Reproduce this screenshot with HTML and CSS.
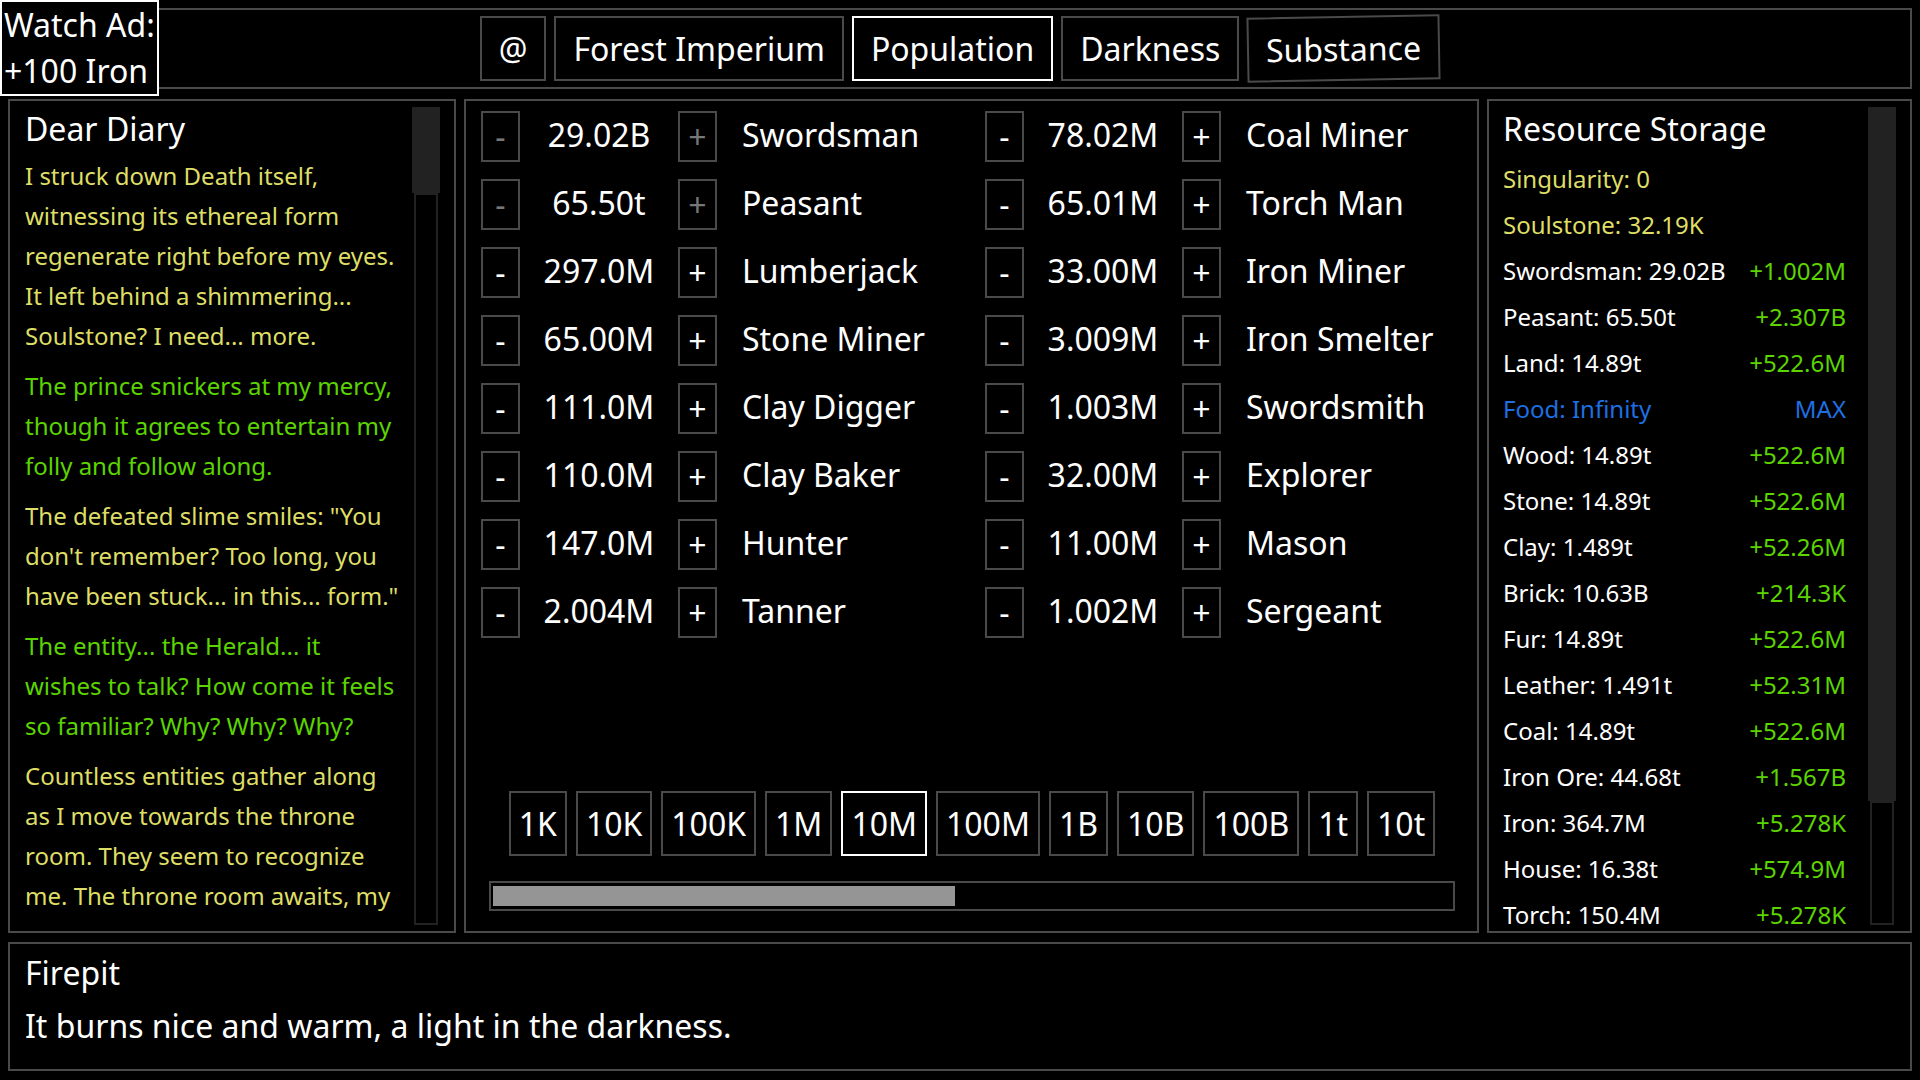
FILE: index.html
```html
<!DOCTYPE html>
<html lang="en">
  <head>
    <meta charset="UTF-8" />
    <meta name="viewport" content="width=device-width, initial-scale=1.0" />
    <title>Forest Imperium</title>
    <link rel="stylesheet" href="styles.css">
  </head>
  <body>
    <div class="watch-ad">Watch Ad:<br>+100 Iron</div>

    <nav class="top-bar">
      <button class="tab">@</button>
      <button class="tab">Forest Imperium</button>
      <button class="tab active">Population</button>
      <button class="tab">Darkness</button>
      <button class="tab wobble">Substance</button>
    </nav>

    <div class="main">
      <section class="panel diary">
        <div class="panel-body">
          <h2>Dear Diary</h2>
          <p class="yellow">I struck down Death itself, witnessing its ethereal form regenerate right before my eyes. It left behind a shimmering... Soulstone? I need... more.</p>
          <p class="green">The prince snickers at my mercy, though it agrees to entertain my folly and follow along.</p>
          <p class="yellow">The defeated slime smiles: "You don't remember? Too long, you have been stuck... in this... form."</p>
          <p class="green">The entity... the Herald... it wishes to talk? How come it feels so familiar? Why? Why? Why?</p>
          <p class="yellow">Countless entities gather along as I move towards the throne room. They seem to recognize me. The throne room awaits, my</p>
        </div>
        <div class="scrollbar">
          <div class="thumb diary-thumb"></div>
          <div class="track"></div>
        </div>
      </section>

      <section class="panel jobs">
        <div class="job-grid">
          <div class="job"><button class="step" disabled>-</button><span class="count">29.02B</span><button class="step" disabled>+</button><span class="job-name">Swordsman</span></div>
          <div class="job"><button class="step" disabled>-</button><span class="count">65.50t</span><button class="step" disabled>+</button><span class="job-name">Peasant</span></div>
          <div class="job"><button class="step">-</button><span class="count">297.0M</span><button class="step">+</button><span class="job-name">Lumberjack</span></div>
          <div class="job"><button class="step">-</button><span class="count">65.00M</span><button class="step">+</button><span class="job-name">Stone Miner</span></div>
          <div class="job"><button class="step">-</button><span class="count">111.0M</span><button class="step">+</button><span class="job-name">Clay Digger</span></div>
          <div class="job"><button class="step">-</button><span class="count">110.0M</span><button class="step">+</button><span class="job-name">Clay Baker</span></div>
          <div class="job"><button class="step">-</button><span class="count">147.0M</span><button class="step">+</button><span class="job-name">Hunter</span></div>
          <div class="job"><button class="step">-</button><span class="count">2.004M</span><button class="step">+</button><span class="job-name">Tanner</span></div>

          <div class="job"><button class="step">-</button><span class="count">78.02M</span><button class="step">+</button><span class="job-name">Coal Miner</span></div>
          <div class="job"><button class="step">-</button><span class="count">65.01M</span><button class="step">+</button><span class="job-name">Torch Man</span></div>
          <div class="job"><button class="step">-</button><span class="count">33.00M</span><button class="step">+</button><span class="job-name">Iron Miner</span></div>
          <div class="job"><button class="step">-</button><span class="count">3.009M</span><button class="step">+</button><span class="job-name">Iron Smelter</span></div>
          <div class="job"><button class="step">-</button><span class="count">1.003M</span><button class="step">+</button><span class="job-name">Swordsmith</span></div>
          <div class="job"><button class="step">-</button><span class="count">32.00M</span><button class="step">+</button><span class="job-name">Explorer</span></div>
          <div class="job"><button class="step">-</button><span class="count">11.00M</span><button class="step">+</button><span class="job-name">Mason</span></div>
          <div class="job"><button class="step">-</button><span class="count">1.002M</span><button class="step">+</button><span class="job-name">Sergeant</span></div>
        </div>

        <div class="multipliers">
          <button class="mult">1K</button>
          <button class="mult">10K</button>
          <button class="mult">100K</button>
          <button class="mult">1M</button>
          <button class="mult active">10M</button>
          <button class="mult">100M</button>
          <button class="mult">1B</button>
          <button class="mult">10B</button>
          <button class="mult">100B</button>
          <button class="mult">1t</button>
          <button class="mult">10t</button>
        </div>

        <div class="progress">
          <div class="progress-fill" style="width: 48.2%"></div>
        </div>
      </section>

      <section class="panel storage">
        <div class="storage-body">
          <h2>Resource Storage</h2>
          <div class="res-list">
            <div class="res yellow"><span>Singularity: 0</span></div>
            <div class="res yellow"><span>Soulstone: 32.19K</span></div>
            <div class="res"><span>Swordsman: 29.02B</span><span class="rate">+1.002M</span></div>
            <div class="res"><span>Peasant: 65.50t</span><span class="rate">+2.307B</span></div>
            <div class="res"><span>Land: 14.89t</span><span class="rate">+522.6M</span></div>
            <div class="res blue"><span>Food: Infinity</span><span>MAX</span></div>
            <div class="res"><span>Wood: 14.89t</span><span class="rate">+522.6M</span></div>
            <div class="res"><span>Stone: 14.89t</span><span class="rate">+522.6M</span></div>
            <div class="res"><span>Clay: 1.489t</span><span class="rate">+52.26M</span></div>
            <div class="res"><span>Brick: 10.63B</span><span class="rate">+214.3K</span></div>
            <div class="res"><span>Fur: 14.89t</span><span class="rate">+522.6M</span></div>
            <div class="res"><span>Leather: 1.491t</span><span class="rate">+52.31M</span></div>
            <div class="res"><span>Coal: 14.89t</span><span class="rate">+522.6M</span></div>
            <div class="res"><span>Iron Ore: 44.68t</span><span class="rate">+1.567B</span></div>
            <div class="res"><span>Iron: 364.7M</span><span class="rate">+5.278K</span></div>
            <div class="res"><span>House: 16.38t</span><span class="rate">+574.9M</span></div>
            <div class="res"><span>Torch: 150.4M</span><span class="rate">+5.278K</span></div>
          </div>
        </div>
        <div class="scrollbar">
          <div class="thumb storage-thumb"></div>
          <div class="track"></div>
        </div>
      </section>
    </div>

    <footer class="panel info">
      <h3>Firepit</h3>
      <p>It burns nice and warm, a light in the darkness.</p>
    </footer>
  </body>
</html>
```

FILE: styles.css
```css
body {
  margin: 8px;
  background: #000;
  color: #fff;
  font-family: "Noto Sans", "Open Sans", sans-serif;
  font-size: 32px;
}

button {
  font: inherit;
  color: inherit;
  background: #000;
  border: 2px solid #4a4a4a;
  margin: 0;
  cursor: pointer;
}

button.active {
  border-color: #fff;
}

.yellow {
  color: #dede66;
}

.green {
  color: #5cd400;
}

.blue {
  color: #1f6fe0;
}

/* ad overlay sits on top of the tab bar corner */
.watch-ad {
  position: absolute;
  top: 0;
  left: 0;
  padding: 0 2px;
  line-height: 46px;
  border: 2px solid #fff;
  background: #000;
  z-index: 2;
}

.top-bar {
  height: 81px;
  box-sizing: border-box;
  border: 2px solid #4a4a4a;
  display: flex;
  justify-content: center;
  align-items: center;
  gap: 8px;
}

.tab {
  padding: 9px 17px;
  line-height: normal;
}

.tab.wobble {
  transform: rotate(-1deg);
}

.main {
  display: flex;
  gap: 8px;
  margin-top: 10px;
  height: 834px;
}

.panel {
  border: 2px solid #4a4a4a;
  box-sizing: border-box;
}

.panel h2 {
  margin: 0 0 6px 0;
  font-size: 32px;
  font-weight: normal;
  line-height: normal;
}

.panel-body {
  flex: 1;
  overflow: hidden;
}

.scrollbar {
  width: 28px;
  display: flex;
  flex-direction: column;
}

.thumb {
  background: #222;
}

.track {
  flex: 1;
  border: 2px solid #222;
  margin: 0 2px;
}

.diary-thumb {
  height: 86px;
}

.storage-thumb {
  height: 694px;
}

/* diary */
.diary {
  width: 448px;
  display: flex;
  gap: 12px;
  padding: 6px 14px 6px 15px;
}

.diary p {
  margin: 0 0 10px 0;
  font-size: 24px;
  line-height: 40px;
}

/* jobs */
.jobs {
  flex: 1;
  display: flex;
  flex-direction: column;
  padding: 10px 14px 20px 15px;
}

.job-grid {
  display: grid;
  grid-template-columns: 1fr 1fr;
  grid-template-rows: repeat(8, 51px);
  grid-auto-flow: column;
  column-gap: 26px;
  row-gap: 17px;
}

.job {
  display: flex;
  align-items: center;
}

.step {
  width: 39px;
  height: 51px;
  padding: 0;
  line-height: 1;
}

.step:disabled {
  color: #777;
}

.count,
.job-name {
  margin-bottom: 4px;
}

.count {
  width: 158px;
  text-align: center;
}

.job-name {
  margin-left: 25px;
}

.multipliers {
  margin-top: auto;
  display: flex;
  justify-content: center;
  gap: 9px;
}

.mult {
  padding: 9px 8px;
  line-height: normal;
}

.progress {
  margin: 25px 8px 0 8px;
  height: 30px;
  box-sizing: border-box;
  border: 2px solid #4a4a4a;
  padding: 3px 2px;
}

.progress-fill {
  height: 100%;
  background: #959595;
}

/* resources */
.storage {
  width: 425px;
  display: flex;
  gap: 12px;
  padding: 6px 14px 0 14px;
}

.storage-body {
  flex: 1;
}

.storage .scrollbar {
  margin-bottom: 6px;
}

.storage h2 {
  margin-bottom: 14px;
}

.res-list {
  display: flex;
  flex-direction: column;
  gap: 16px;
}

.res {
  display: flex;
  justify-content: space-between;
  line-height: 30px;
  font-size: 24px;
  padding-right: 10px;
}

.rate {
  color: #5cd400;
}

/* info footer */
.info {
  margin-top: 9px;
  height: 129px;
  padding: 7px 14px 0 15px;
}

.info h3 {
  margin: 0 0 10px 0;
  font-size: 32px;
  font-weight: normal;
  line-height: normal;
}

.info p {
  margin: 0;
  line-height: normal;
}
```
